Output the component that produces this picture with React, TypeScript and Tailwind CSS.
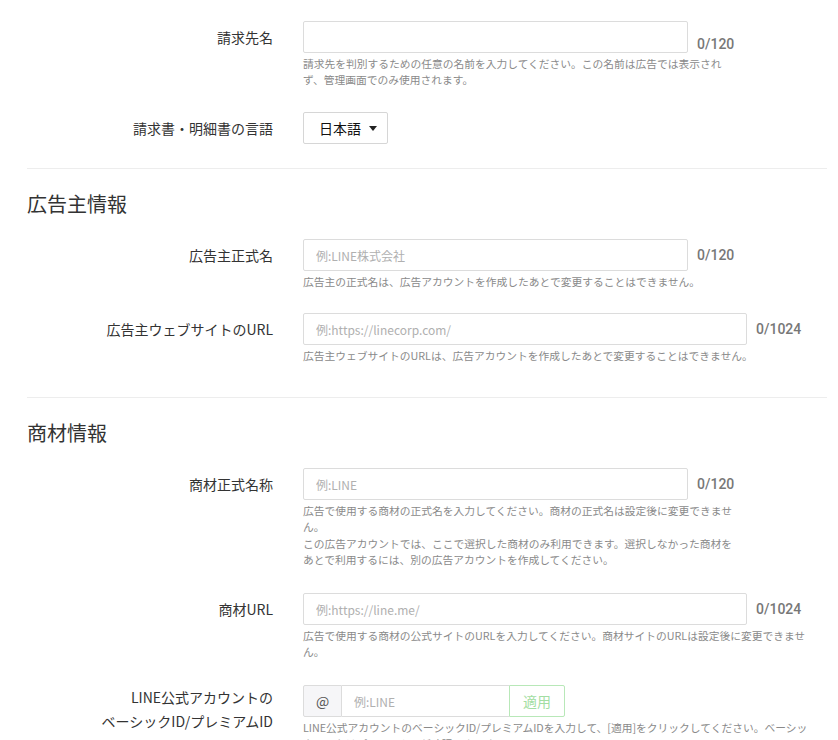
import React from "react";

const jp = "font-['Noto_Sans_CJK_JP','Noto_Sans',sans-serif]";

// 入力欄の下に出る補足テキスト
function Help({ children, w }: { children: React.ReactNode; w: string }) {
  return <div className={`mt-[3px] text-[10.75px] leading-[16px] text-[#8a8a8a] ${w}`}>{children}</div>;
}

function Row({ label, children, className = "" }: { label: React.ReactNode; children: React.ReactNode; className?: string }) {
  return (
    <div className={`flex ${className}`}>
      <div className="w-[246px] shrink-0 text-right text-[14px] leading-[32px] text-[#333]">{label}</div>
      <div className="ml-[30px] flex-1">{children}</div>
    </div>
  );
}

function TextField({ placeholder, width, count, low }: { placeholder?: string; width: string; count: string; low?: boolean }) {
  return (
    <div className={`flex ${low ? "items-end" : "items-center"}`}>
      <input
        className={`${width} h-[32px] rounded-[2px] border border-[#dcdcdc] px-[12px] text-[12px] text-[#333] outline-none placeholder:text-[#b0b0b0]`}
        placeholder={placeholder}
      />
      <span className={`ml-[9px] font-['Roboto','Liberation_Sans',sans-serif] text-[14px] font-medium leading-[20px] text-[#777] ${low ? "mb-[-1px]" : ""}`}>{count}</span>
    </div>
  );
}

function SectionTitle({ children }: { children: React.ReactNode }) {
  return <h2 className="mt-[21px] mb-[21px] text-[20px] leading-[28px] font-normal text-[#333]">{children}</h2>;
}

export default function App() {
  return (
    <div className={`min-h-screen bg-white pl-[27px] pr-[11px] pt-[21px] ${jp}`}>
      <Row label="請求先名">
        <TextField width="w-[385px]" count="0/120" low />
        <Help w="w-[435px]">
          請求先を判別するための任意の名前を入力してください。この名前は広告では表示されず、管理画面でのみ使用されます。
        </Help>
      </Row>

      <Row label="請求書・明細書の言語" className="mt-[24px]">
        <button className="flex h-[32px] w-[85px] items-center rounded-[2px] border border-[#d6d6d6] pl-[15px] text-[14px] text-[#111]">
          日本語
          <span className="ml-[8px] inline-block h-0 w-0 border-x-[4px] border-t-[5px] border-x-transparent border-t-[#222]" />
        </button>
      </Row>

      <div className="mt-[24px] h-px bg-[#ededed]" />

      <SectionTitle>広告主情報</SectionTitle>

      <Row label="広告主正式名">
        <TextField width="w-[385px]" placeholder="例:LINE株式会社" count="0/120" />
        <Help w="w-[525px]">広告主の正式名は、広告アカウントを作成したあとで変更することはできません。</Help>
      </Row>

      <Row label="広告主ウェブサイトのURL" className="mt-[23px]">
        <TextField width="w-[444px]" placeholder="例:https://linecorp.com/" count="0/1024" />
        <Help w="w-[525px]">広告主ウェブサイトのURLは、広告アカウントを作成したあとで変更することはできません。</Help>
      </Row>

      <div className="mt-[33px] h-px bg-[#ededed]" />

      <SectionTitle>商材情報</SectionTitle>

      <Row label="商材正式名称">
        <TextField width="w-[385px]" placeholder="例:LINE" count="0/120" />
        <Help w="w-[435px]">
          <p>広告で使用する商材の正式名を入力してください。商材の正式名は設定後に変更できません。</p>
          <p className="mt-[1px]">この広告アカウントでは、ここで選択した商材のみ利用できます。選択しなかった商材をあとで利用するには、別の広告アカウントを作成してください。</p>
        </Help>
      </Row>

      <Row label="商材URL" className="mt-[25px]">
        <TextField width="w-[444px]" placeholder="例:https://line.me/" count="0/1024" />
        <Help w="w-[510px]">広告で使用する商材の公式サイトのURLを入力してください。商材サイトのURLは設定後に変更できません。</Help>
      </Row>

      <Row
        className="mt-[25px]"
        label={
          <div className="leading-[24px]">
            LINE公式アカウントの
            <br />
            ベーシックID/プレミアムID
          </div>
        }
      >
        <div className="flex h-[32px] w-[262px]">
          <span className="flex w-[39px] items-center justify-center rounded-l-[2px] border border-[#dcdcdc] bg-[#f6f6f8] text-[14px] text-[#555]">@</span>
          <input
            className="h-full w-[167px] border-y border-[#dcdcdc] px-[12px] text-[12px] outline-none placeholder:text-[#b0b0b0]"
            placeholder="例:LINE"
          />
          <button className="w-[56px] rounded-r-[2px] border border-[#b8e8b8] text-[14px] text-[#a3dea3]">適用</button>
        </div>
        <Help w="w-[510px]">
          LINE公式アカウントのベーシックID/プレミアムIDを入力して、[適用]をクリックしてください。ベーシックIDまたはプレミアムIDが確認できます。
        </Help>
      </Row>
    </div>
  );
}
